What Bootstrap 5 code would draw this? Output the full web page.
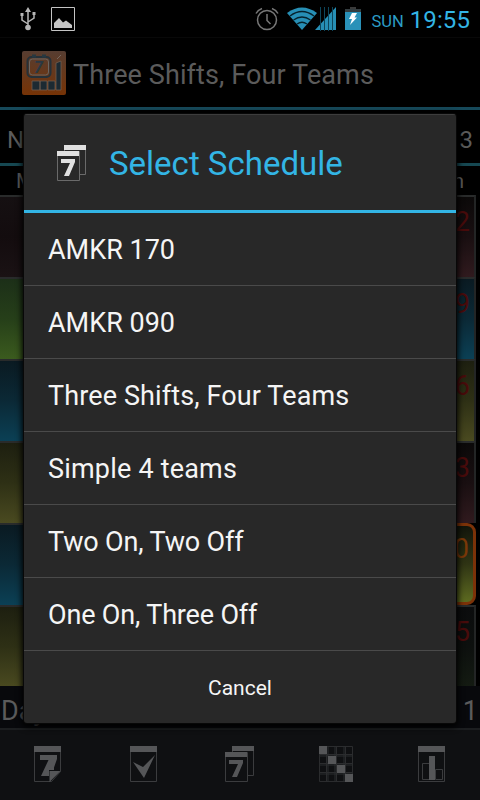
<!DOCTYPE html>
<html lang="en">
<head>
<meta charset="utf-8">
<meta name="viewport" content="width=device-width, initial-scale=1">
<title>Three Shifts, Four Teams</title>
<link rel="stylesheet" href="https://cdn.jsdelivr.net/npm/bootstrap@5.3.0/dist/css/bootstrap.min.css">
<style>
body{background:#000;font-family:Roboto,"Noto Sans",sans-serif;overflow:hidden}
svg{display:block;flex:none}
.screen{width:480px;height:800px;background:#000;color:#5b5b5b}
.status{height:38px;border-bottom:1px solid #080808;color:#33b5e5;padding:0 10px 0 19px}
.status .day{font-size:16.5px;line-height:20px;letter-spacing:0;color:#2b9cc6;margin:6px 6px 0 10px}
.status .time{font-size:24px;line-height:24px;letter-spacing:.1px;padding-top:2px}
.status .picture{margin-left:14px}
.status .battery{margin-left:8px}
.appbar{height:72px;border-bottom:3px solid #16495a;padding-left:22px;font-size:27px;gap:7px}
.appbar span{padding-top:6px;letter-spacing:.1px}
.month{height:56px;border-bottom:3px solid #164852;padding:6px 7px 0;font-size:24px}
.month span:first-child{letter-spacing:-1px}
.weekdays{height:29px;font-size:21px;padding:3px 16px 0 16px}
.grid7{display:grid;grid-template-columns:repeat(7,68px);grid-template-rows:repeat(6,82px);height:491px}
.daycell{border-top:2px solid #292b2b;border-right:2px solid #232525;font-size:27px;line-height:30px;color:#480b0b;padding:10px 4px 0 0;text-align:right}
.first{grid-column:1}
.last{grid-column:7}
.rose{background:linear-gradient(#0b0909,#190f11 50%,#301a1e)}
.plum{background:linear-gradient(#151012,#130c0e 50%,#1a1214)}
.green{background:linear-gradient(#1c2f18,#263f19 50%,#3b5b1e)}
.blue{background:linear-gradient(#0a1a22,#0b2936 50%,#0b4055)}
.olive{background:linear-gradient(#1d1f10,#2e3015 50%,#4a4a20)}
.moss{background:linear-gradient(#0b0c0d,#0d100e 50%,#141b12)}
.today{border:3px solid #7c3208;border-radius:9px;color:#7a3808;padding:8px 4px 0 0;background:linear-gradient(#12150b,#2f3414 50%,#5d6a20)}
.summary{height:42px;font-size:27px;padding:5px 2px 0 1px;background:#08090c}
.tools{height:72px;border-top:2px solid #1c1e20;background:#0f1012;padding:0 1px 2px 0;margin-left:-1px}
.tools svg{fill:#555658}
.tools .matrix{margin-left:2px}
.dialog-box{position:absolute;left:24px;top:114px;width:432px;height:609px;background:#282828;border-radius:3px;box-shadow:0 0 0 1px #080808,0 2px 6px 2px #000;overflow:hidden;color:#f5f5f5}
.dialog-head{height:99px;border-top:1px solid #3d3d3d;border-bottom:3px solid #33b5e5;color:#33b5e5;font-size:33px;padding-left:33px;gap:23px}
.head-text{padding-top:2px}
.choice{height:73px;border-bottom:1px solid #4a4a4a;padding:2px 24px 0;font-size:27px}
.wide{letter-spacing:.12px}
.wider{letter-spacing:.2px}
.tight{letter-spacing:-.16px}
.cancel{height:72px;font-size:21px;padding-top:3px}
</style>
<script src="https://cdn.jsdelivr.net/npm/bootstrap@5.3.0/dist/js/bootstrap.bundle.min.js"></script>
</head>
<body>
<div class="screen position-relative overflow-hidden d-flex flex-column">
  <header class="status d-flex align-items-center">
    <svg width="18" height="26" viewBox="0 0 18 26" fill="none" stroke="#b5b5b5" stroke-width="1.5"><path d="M9 4v17M9 18L3 14V9M9 16l6-4V8"/><path d="M9 1L6 6h6zM1.500 7h3v3h-3zM13.500 6h3v3h-3z" fill="#b5b5b5" stroke="none"/><circle cx="9" cy="21.500" r="2.800" fill="#b5b5b5" stroke="none"/></svg>
    <svg class="picture" width="24" height="24"><path d="M.5.5h23v23H.5z" fill="none" stroke="#c4c4c4"/><path d="M3 21v-5l5-5 4 4.500 3-2 6 4.500v3z" fill="#c4c4c4"/></svg>
    <svg class="ms-auto" width="24" height="24" viewBox="0 0 24 24" fill="none" stroke="#777" stroke-width="1.500"><circle cx="12" cy="13" r="9.500"/><path d="M12 7v6.500l3.500 3.500M1 6.500Q3 3 7 1.500M23 6.500Q21 3 17 1.500"/></svg>
    <svg class="ms-2" width="50" height="24" viewBox="0 0 50 24"><path d="M0 6Q15-5 30 6L15 23z" fill="#278fb5"/><path d="M3 9q12-9 24 0M6.500 13q8.500-6 17 0M10 17q5-3.500 10 0" fill="none" stroke="#06222c" stroke-width="1.300"/><path d="M28 23L49 0v23z" fill="#278fb5"/><path d="M33.500 0v24M37.500 0v24M41.500 0v24M45.500 0v24" stroke="#0d465b"/></svg>
    <svg class="battery" width="16" height="24"><path d="M5 0h6v4H5z" fill="#3a3a3a"/><path d="M0 2h16v4H0z" fill="#343d40"/><path d="M0 5h16v18H0z" fill="#2a91b8"/><path d="M7 6h5L9.500 10.500H12L5 18l2-6H4z" fill="#fff"/></svg>
    <span class="day">SUN</span><span class="time">19:55</span>
  </header>
  <div class="appbar d-flex align-items-center">
    <svg width="44" height="44" viewBox="0 0 44 44"><defs><linearGradient id="o" x2="0" y2="1"><stop stop-color="#563d31"/><stop offset="1" stop-color="#763306"/></linearGradient></defs><rect width="44" height="44" rx="2" fill="url(#o)"/><rect x="5.500" y="6" width="23" height="20" rx="4" fill="none" stroke="#263138" stroke-width="2"/><rect x="7.500" y="8" width="19" height="16" rx="3" fill="none" stroke="#6b6560"/><path d="M10 5h4M20 5h4" stroke="#273840" stroke-width="3"/><text x="12" y="22" font-size="16" font-weight="700" font-style="italic" fill="#293843">7</text><path d="M10 39V30h8v9zM18 39V30h7v9zM26 39V30h7v9zM34 39V12l5-2v29z" fill="#1c2a32" stroke="#766353" stroke-width=".7"/><path d="M35 8l4-4" stroke="#75675d"/></svg>
    <span>Three Shifts, Four Teams</span>
  </div>
  <div class="month d-flex justify-content-between align-items-center"><span>Now</span><span>3</span></div>
  <div class="weekdays d-flex justify-content-between align-items-center"><span>Mon</span><span>Sun</span></div>
  <main class="grid7">
    <div class="daycell first plum"></div><div class="daycell last rose">2</div>
    <div class="daycell first green"></div><div class="daycell last blue">9</div>
    <div class="daycell first blue"></div><div class="daycell last olive">16</div>
    <div class="daycell first olive"></div><div class="daycell last rose">23</div>
    <div class="daycell first blue"></div><div class="daycell last today">30</div>
    <div class="daycell first olive"></div><div class="daycell last moss">5</div>
  </main>
  <div class="summary d-flex justify-content-between"><span>Day</span><span>1</span></div>
  <nav class="tools d-flex">
    <div class="col d-flex justify-content-center align-items-center"><svg width="27" height="36"><path d="M.5.5h26v25l-9 10H.5z" fill="none" stroke="#3b3c3e"/><path d="M0 0h27v6H0zM6 9h17v4l-3 8.500V24h-5v6H7l7.500-16H6zM15.500 36V25h11z"/></svg></div>
    <div class="col d-flex justify-content-center align-items-center"><svg width="27" height="36"><path d="M.5.5h26v35H.5z" fill="none" stroke="#3b3c3e"/><path d="M0 0h27v6H0zM3 16l10 5L25 9 14 32z"/></svg></div>
    <div class="col d-flex justify-content-center align-items-center"><svg width="29" height="36"><path d="M22.500 29.500h6V.5h-21v6M.5 6.500h22v29H.5z" fill="none" stroke="#3b3c3e"/><path d="M7 0h22v5H7zM0 6h22v5H0zM4 14h14v3l-6 14H7l6-13H4z"/></svg></div>
    <div class="col d-flex justify-content-center align-items-center"><svg class="matrix" width="34" height="36"><path d="M.5.5h33v35H.5zM.5 8.500h33M.5 10h33M.5 17.500h33M.5 19h33M.5 26.500h33M.5 28h33M7.500 0v36M9 0v36M16 0v36M17.500 0v36M25 0v36M26.500 0v36" fill="none" stroke="#2b2c2e"/><path d="M0 0h8v8H0zM9 10h8v8H9zM18 19h8v8h-8zM26 28h8v8h-8z"/></svg></div>
    <div class="col d-flex justify-content-center align-items-center"><svg width="27" height="36"><path d="M.5.5h26v35H.5zM4.500 17.500h7v16h-7zM17.500 23.500h7v10h-7z" fill="none" stroke="#3b3c3e"/><path d="M0 0h27v6H0zM11 10h6v24h-6z"/></svg></div>
  </nav>

  <section class="dialog-box d-flex flex-column" role="dialog" aria-label="Select Schedule">
    <div class="dialog-head d-flex align-items-center">
      <svg width="29" height="36" fill="#e0e0e0"><path d="M22.500 29.500h6V.5h-21v6M.5 6.500h22v29H.5z" fill="none" stroke="#6a6a6a"/><path d="M7 0h22v5H7zM0 6h22v5H0zM4 14h14v3l-6 14H7l6-13H4z"/></svg>
      <span class="head-text">Select Schedule</span>
    </div>
    <div class="choice d-flex align-items-center">AMKR 170</div>
    <div class="choice d-flex align-items-center">AMKR 090</div>
    <div class="choice wide d-flex align-items-center">Three Shifts, Four Teams</div>
    <div class="choice wider d-flex align-items-center">Simple 4 teams</div>
    <div class="choice tight d-flex align-items-center">Two On, Two Off</div>
    <div class="choice tight d-flex align-items-center">One On, Three Off</div>
    <div class="cancel d-flex align-items-center justify-content-center">Cancel</div>
  </section>
</div>
</body>
</html>
